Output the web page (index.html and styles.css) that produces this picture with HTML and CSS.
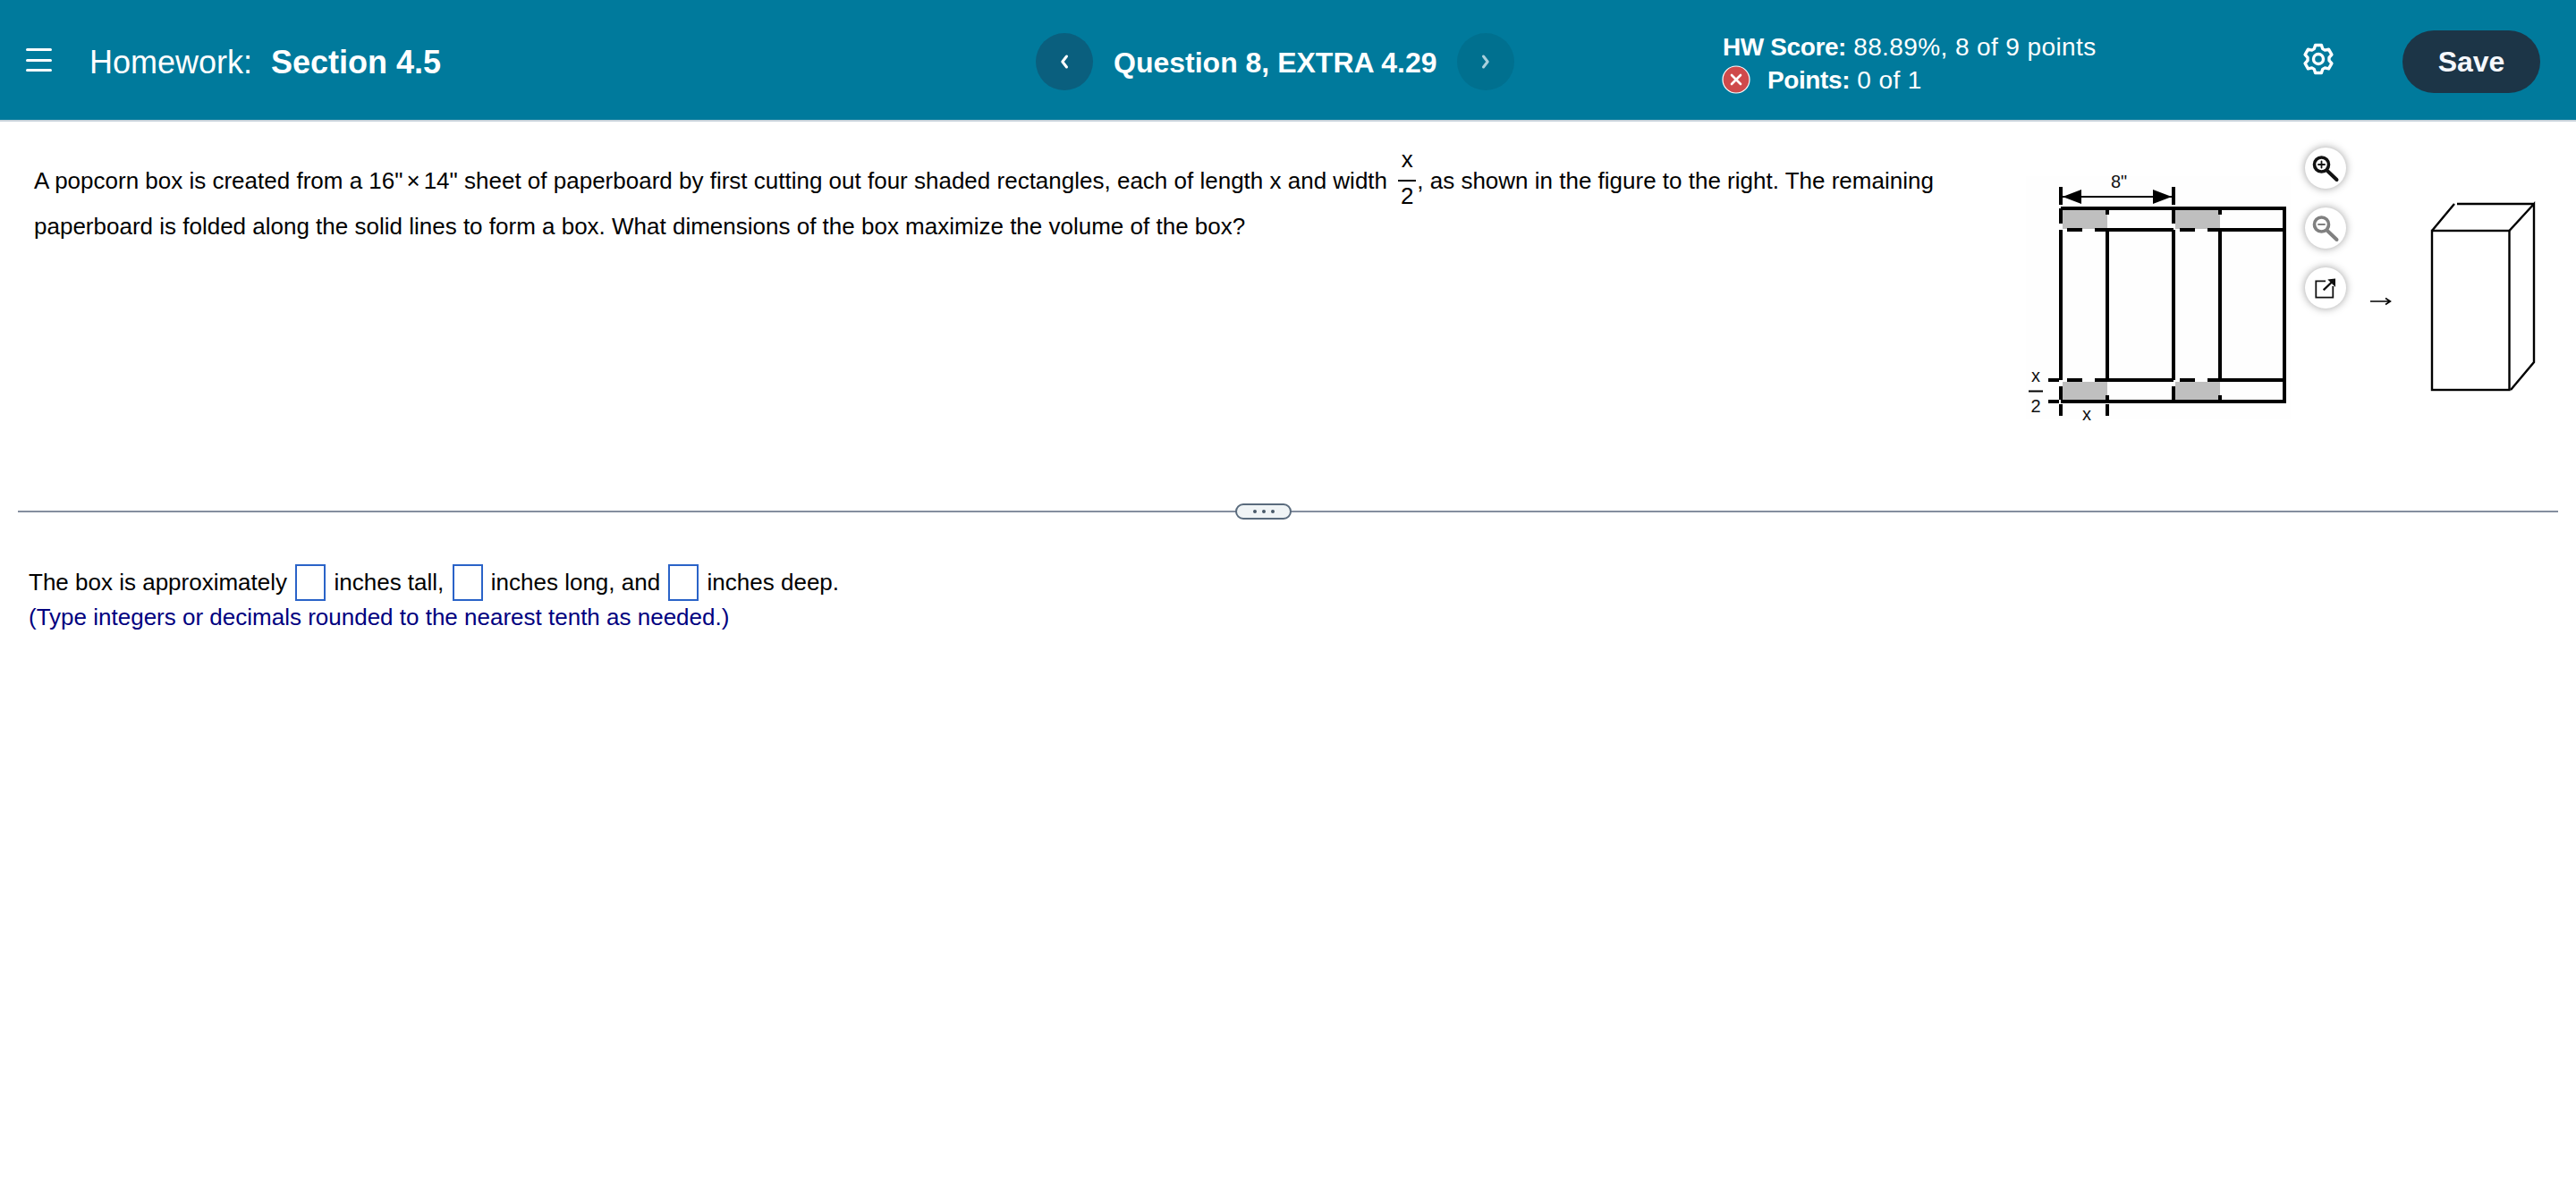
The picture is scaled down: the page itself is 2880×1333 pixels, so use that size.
FILE: index.html
```html
<!DOCTYPE html>
<html lang="en">
<head>
<meta charset="utf-8">
<title>Homework: Section 4.5</title>
<link rel="stylesheet" href="styles.css">
</head>
<body>
<header class="topbar">
  <div class="brand">
    <button class="menu" aria-label="Menu"><span></span><span></span><span></span></button>
    <h1 class="title">Homework:<b>Section 4.5</b></h1>
  </div>
  <nav class="pager">
    <button class="round prev" aria-label="Previous"><svg width="12" height="20" viewBox="0 0 12 20"><path d="M8.500 4 3.800 10l4.700 6" fill="none" stroke="#fff" stroke-width="3" stroke-linecap="round" stroke-linejoin="round"/></svg></button>
    <span class="qname">Question 8, EXTRA 4.29</span>
    <button class="round next" aria-label="Next"><svg width="12" height="20" viewBox="0 0 12 20"><path d="M3.500 4l4.700 6-4.700 6" fill="none" stroke="#a9d0dc" stroke-width="3" stroke-linecap="round" stroke-linejoin="round"/></svg></button>
  </nav>
  <div class="score">
    <div class="score-line"><b>HW Score:</b> 88.89%, 8 of 9 points</div>
    <div class="score-line points">
      <svg class="wrong" width="32" height="32" viewBox="0 0 32 32"><circle cx="16" cy="16" r="15" fill="#cf4a4b" stroke="#fff" stroke-width="1.200"/><path d="M11 11l10 10M21 11 11 21" stroke="#fff" stroke-width="2.600" stroke-linecap="round"/></svg>
      <span><b>Points:</b> 0 of 1</span>
    </div>
  </div>
  <button class="gear" aria-label="Settings">
    <svg width="36" height="36" viewBox="0 0 36 36" fill="none" stroke="#fff" stroke-width="3.400" stroke-linejoin="round"><path d="M14.600 2.500h6.800l1.300 4.100 2.600 1.500 4.200-.9 3.400 5.900-2.900 3.200v3.400l2.900 3.200-3.400 5.900-4.200-.9-2.600 1.500-1.300 4.100h-6.800l-1.300-4.100-2.600-1.500-4.200.9-3.400-5.900 2.900-3.200v-3.400l-2.900-3.200 3.400-5.900 4.200.9 2.600-1.500z"/><circle cx="18" cy="18" r="5.500"/></svg>
  </button>
  <button class="save">Save</button>
</header>

<main>
  <section class="question">
    <div class="prompt">
      <p>A popcorn box is created from a 16"<span class="times">×</span>14" sheet of paperboard by first cutting out four shaded rectangles, each of length x and width <span class="frac"><span class="num">x</span><span class="den">2</span></span>, as shown in the figure to the right. The remaining paperboard is folded along the solid lines to form a box. What dimensions of the box maximize the volume of the box?</p>
    </div>
    <figure class="figure">
      <svg class="art" width="640" height="340" viewBox="2240 150 640 340">
        <rect x="2265" y="197" width="296" height="272" fill="#fefefe"/>
        <g fill="#bfbfbf">
          <rect x="2306" y="235" width="50" height="21"/>
          <rect x="2432" y="235" width="50" height="21"/>
          <rect x="2306" y="427" width="50" height="20"/>
          <rect x="2432" y="427" width="50" height="20"/>
        </g>
        <g stroke="#000" stroke-width="4" fill="none">
          <path d="M2304 233H2556M2554 233V451M2304 449H2556"/>
          <path d="M2356 257H2430M2482 257H2554M2356 425H2430M2482 425H2554"/>
          <path d="M2356 257V425M2430 257V425M2482 257V425"/>
          <path d="M2304 257V425M2304 233V250"/>
          <path d="M2311 257H2328M2342 257H2356M2437 257H2454M2468 257H2482"/>
          <path d="M2311 425H2328M2342 425H2356M2437 425H2454M2468 425H2482M2290 425H2302M2290 449H2302"/>
          <path d="M2356 235V240M2482 235V240M2430 235V250M2304 432V447M2430 432V447M2356 442V447M2482 442V447"/>
          <path d="M2304 452V465M2356 452V465M2304 209V229M2430 209V229"/>
        </g>
        <path d="M2306 220H2428" stroke="#000" stroke-width="2"/>
        <path d="M2306 220l21-8v16zM2428 220l-21-8v16z" fill="#000"/>
        <path d="M2268 437.500H2284" stroke="#000" stroke-width="2"/>
        <g class="fig-label">
          <text x="2369" y="210" text-anchor="middle">8"</text>
          <text x="2276" y="427" text-anchor="middle">x</text>
          <text x="2276" y="461" text-anchor="middle">2</text>
          <text x="2333" y="470" text-anchor="middle">x</text>
        </g>
        <path d="M2650 337H2672M2667 333.500l5.500 3.500-5.500 3.500" stroke="#000" stroke-width="1.500" fill="none"/>
        <g stroke="#000" stroke-width="2.400" fill="none">
          <rect x="2719" y="258" width="86.500" height="178"/>
          <path d="M2719 258 2744 228M2747 228H2833M2805.500 258 2833 228V405L2807 436"/>
        </g>
      </svg>
      <button class="tool in" aria-label="Zoom in"><svg width="34" height="34" viewBox="0 0 34 34" fill="none" stroke="#111" stroke-linecap="round"><circle cx="12.500" cy="13" r="8" stroke-width="3.600"/><path d="M12.500 9.500v7M9 13h7" stroke-width="1.800"/><path d="M19 20l10.500 10" stroke-width="4"/></svg></button>
      <button class="tool out" aria-label="Zoom out"><svg width="34" height="34" viewBox="0 0 34 34" fill="none" stroke="#808080" stroke-linecap="round"><circle cx="12.500" cy="13" r="8" stroke-width="3.600"/><path d="M9 13h7" stroke-width="1.800"/><path d="M19 20l10.500 10" stroke-width="4"/></svg></button>
      <button class="tool open" aria-label="Open in new window"><svg width="34" height="34" viewBox="0 0 34 34" fill="none" stroke="#111"><path d="M17 9.300H6.300V27.600H25.300V15" stroke-width="1.800"/><path d="M14.700 19.300 25 9.500" stroke-width="2.400"/><path d="M19.300 7.600 28 6.600V16z" fill="#111" stroke="none"/></svg></button>
    </figure>
  </section>

  <div class="divider"><span class="pill"><i></i><i></i><i></i></span></div>

  <section class="answer">
    <p class="answer-line">The box is approximately <span class="blank"></span> inches tall, <span class="blank"></span> inches long, and <span class="blank"></span> inches deep.</p>
    <p class="hint">(Type integers or decimals rounded to the nearest tenth as needed.)</p>
  </section>
</main>
</body>
</html>
```
FILE: styles.css
```css
* { box-sizing: border-box; }
html, body { margin: 0; padding: 0; background: #fff; }
body { font-family: "Liberation Sans", Arial, sans-serif; color: #000; height: 1333px; overflow: hidden; }
button { border: 0; padding: 0; background: none; font: inherit; color: inherit; }
p, h1, figure { margin: 0; }

.topbar { display: flex; align-items: center; height: 136px; padding-top: 4px; background: #007a9c; border-bottom: 2px solid #c6d2da; color: #fff; }
.brand { display: flex; align-items: center; width: 1158px; padding-left: 29px; }
.menu { display: flex; flex-direction: column; gap: 8.500px; width: 29px; margin: 0 42px 4px 0; }
.menu span { display: block; height: 3px; border-radius: 2px; background: #fff; }
.title { padding-top: 1px; font-size: 36px; font-weight: 400; line-height: 44px; }
.title b { margin-left: 21px; font-weight: 700; }

.pager { display: flex; align-items: center; width: 768px; }
.round { display: flex; align-items: center; justify-content: center; width: 64px; height: 64px; border-radius: 50%; }
.prev { background: #0a5f7e; }
.next { background: #00708f; }
.qname { margin: 0 22px 0 23px; padding-top: 3px; font-size: 32px; font-weight: 700; white-space: nowrap; }

.score { width: 648px; padding-top: 3px; font-size: 28px; letter-spacing: .4px; line-height: 37px; }
.score b { letter-spacing: -.4px; }
.score-line { white-space: nowrap; }
.points { display: flex; align-items: center; gap: 19px; margin-left: -1px; }
.wrong { flex: none; }

.gear { display: flex; width: 36px; height: 36px; margin: 0 76px 6px 0; }
.save { width: 154px; height: 70px; border-radius: 35px; background: #1c3547; color: #f5f8fd; font-size: 32px; font-weight: 700; }

.question { display: flex; justify-content: space-between; height: 427px; }
.prompt { width: 2200px; padding: 41px 0 0 38px; font-size: 26px; line-height: 51px; }
.times { margin: 0 4px; }
.frac { display: inline-block; vertical-align: -17px; width: 20px; margin: -20px 1px -10px 5px; text-align: center; line-height: 26px; }
.num, .den { display: block; }
.num { height: 38px; border-bottom: 2px solid #000; }
.den { margin-top: 3px; height: 26px; }

.figure { position: relative; width: 640px; height: 340px; margin-top: 14px; }
.art { display: block; }
.fig-label text { font-size: 20px; font-family: "Liberation Sans", Arial, sans-serif; fill: #111; }
.tool { position: absolute; left: 337px; display: flex; align-items: center; justify-content: center; width: 46px; height: 46px; border-radius: 50%; background: #fff; box-shadow: 0 0 10px rgba(0,0,0,.38); }
.tool.in { top: 15px; }
.tool.out { top: 82px; }
.tool.open { top: 149px; }

.divider { position: relative; display: flex; align-items: center; height: 18px; margin: 0 20px; padding-left: 1361px; }
.divider::before { content: ""; position: absolute; left: 0; right: 0; top: 8px; height: 2px; background: #848e9f; }
.pill { position: relative; display: flex; align-items: center; justify-content: center; gap: 6px; width: 63px; height: 18px; border: 2px solid #5a6b7d; border-radius: 9px; background: #f0f4f6; }
.pill i { width: 4px; height: 4px; border-radius: 50%; background: #4a5a6a; }

.answer { padding: 50px 0 0 32px; font-size: 26px; }
.answer-line { line-height: 41px; }
.blank { display: inline-block; vertical-align: -12px; width: 34px; height: 41px; margin: 0 2px; border: 2px solid #2a63c8; background: #fff; }
.hint { color: #00007f; line-height: 36px; }
```
